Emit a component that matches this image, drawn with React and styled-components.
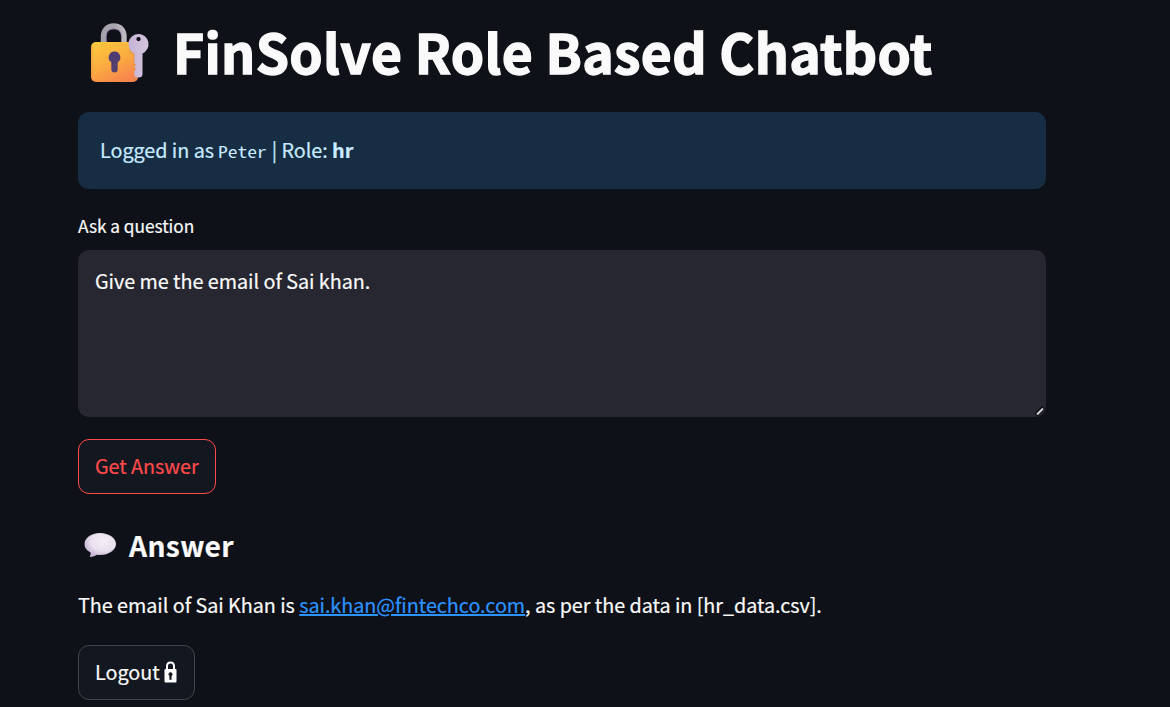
import React from "react";
import styled, { createGlobalStyle } from "styled-components";

const GlobalStyle = createGlobalStyle`
  *, *::before, *::after { box-sizing: border-box; }
  body {
    margin: 0;
    background: #0e1117;
    color: #fafafa;
    font-family: "Noto Sans CJK SC", "Noto Sans", sans-serif;
    font-size: 19.8px;
    letter-spacing: -0.04px;
    -webkit-text-stroke: 0.2px currentColor;
    overflow: hidden;
  }
`;

const Page = styled.main`
  display: flex;
  flex-direction: column;
  align-items: flex-start;
  width: 968px;
  margin-left: 78px;
  height: 707px;
`;

const Title = styled.h1`
  display: flex;
  align-items: flex-start;
  margin: 0;
  padding-top: 15px;
  height: 112px;
  font-size: 53.4px;
  font-weight: 700;
  letter-spacing: 0.33px;
  line-height: 72px;
  -webkit-text-stroke: 1.4px currentColor;
  white-space: nowrap;
  svg { flex: none; width: 60px; height: 60px; margin: 8px 23px 0 12px; }
`;

const Alert = styled.div`
  width: 100%;
  height: 77px;
  padding: 21px 22px;
  border-radius: 11px;
  background: #172d43;
  color: #c7ebff;
  line-height: 33px;
  white-space: nowrap;
`;

const Code = styled.code`
  display: inline-block;
  width: 49px;
  font-family: "Noto Sans Mono CJK SC", "Liberation Mono", monospace;
  font-size: 16px;
  letter-spacing: 0;
  line-height: 1;
  transform: scaleX(1.22);
  transform-origin: left;
  -webkit-text-stroke: 0;
`;

const Label = styled.label`
  margin-top: 21px;
  height: 40px;
  font-size: 17.3px;
  line-height: 32px;
`;

const Field = styled.div`
  position: relative;
  width: 100%;
  height: 167px;
`;

const TextArea = styled.textarea`
  display: block;
  width: 100%;
  height: 100%;
  padding: 15px 17px;
  border: 0;
  border-radius: 11px;
  outline: none;
  resize: none;
  background: #262730;
  color: #fafafa;
  font: inherit;
  letter-spacing: inherit;
  line-height: 31px;
`;

const Grip = styled.svg`
  position: absolute;
  right: 1px;
  bottom: 1px;
  width: 10px;
  height: 10px;
`;

const Button = styled.button`
  display: flex;
  align-items: center;
  flex: none;
  width: ${(p) => p.$width};
  height: 55px;
  margin-top: ${(p) => p.$top};
  padding: 0 16px 2px;
  border: 1px solid ${(p) => (p.$accent ? "#ff4b4b" : "#41444c")};
  border-radius: 11px;
  background: #131720;
  color: ${(p) => (p.$accent ? "#ff4b4b" : "#fafafa")};
  font: inherit;
  letter-spacing: inherit;
  line-height: 35px;
  white-space: nowrap;
  svg { flex: none; width: 13px; height: 22px; margin-left: 4px; }
`;

const Heading = styled.h3`
  display: flex;
  margin: 31px 0 0;
  height: 64px;
  font-size: 28.2px;
  font-weight: 700;
  letter-spacing: 0.35px;
  line-height: 39px;
  svg { flex: none; width: 32px; height: 26px; margin: 7px 13px 0 6px; }
`;

const Answer = styled.p`
  margin: 0;
  height: 34px;
  line-height: 32px;
  letter-spacing: -0.045px;
  white-space: nowrap;
`;

const Link = styled.a`
  color: #2d93ff;
  text-decoration: underline;
  text-decoration-thickness: 1.6px;
`;

const LockKeyIcon = () => (
  <svg viewBox="0 0 60 60" aria-hidden="true">
    <defs>
      <linearGradient id="body" x1="0.2" y1="0" x2="0.75" y2="1">
        <stop offset="0" stopColor="#fcc63d" />
        <stop offset="0.5" stopColor="#fbab40" />
        <stop offset="1" stopColor="#f7824f" />
      </linearGradient>
      <linearGradient id="shackle" x1="0" y1="0" x2="1" y2="0">
        <stop offset="0" stopColor="#a5a2aa" />
        <stop offset="0.5" stopColor="#aaa4ae" />
        <stop offset="1" stopColor="#bdb9c0" />
      </linearGradient>
      <linearGradient id="hole" x1="0" y1="0" x2="0" y2="1">
        <stop offset="0" stopColor="#4b3b72" />
        <stop offset="1" stopColor="#544270" />
      </linearGradient>
      <linearGradient id="key" x1="0" y1="0" x2="1" y2="0">
        <stop offset="0" stopColor="#c5b2d5" />
        <stop offset="1" stopColor="#d5c5df" />
      </linearGradient>
    </defs>
    <path d="M13.5 21V13.5C13.5 7 17.5 3 23.8 3S34 7 34 13.5V21" fill="none" stroke="url(#shackle)" strokeWidth="5.4" />
    <path d="M16.2 20V13.5C16.2 8.7 19 6 23.8 6S31.5 8.7 31.5 13.5" fill="none" stroke="#9b80b3" strokeWidth="0.9" />
    <rect x="1" y="19" width="47" height="40" rx="5" fill="url(#body)" />
    <path d="M1.800 23V54Q2 58 6 58.300H43" fill="none" stroke="#ee8b45" strokeWidth="1" opacity="0.6" />
    <path d="M40 21q-3 7 3 11l1 20-1 7q4-1 5-5V21z" fill="#dc8c51" opacity="0.5" />
    <path d="M24.5 28.5a5.9 5.9 0 0 1 3.200 10.800v7a3.200 3.200 0 0 1-6.400 0v-7a5.900 5.900 0 0 1 3.200-10.800z" fill="url(#hole)" />
    <path fillRule="evenodd" d="M48.5 11A10.2 10.2 0 0 1 52.5 30.5V51Q52.500 54.500 48.500 54.500T44.400 52v-4l1.600-2-1.600-2 1.600-2-1.600-2V30.5A10.2 10.2 0 0 1 48.5 11zm0 3a2.1 2.1 0 1 0 0 4.200a2.1 2.1 0 0 0 0-4.200z" fill="url(#key)" />
    <circle cx="48.500" cy="16.100" r="1.800" fill="#0e1117" />
  </svg>
);

const SpeechIcon = () => (
  <svg viewBox="0 0 32 26" aria-hidden="true">
    <defs>
      <radialGradient id="bubble" cx="0.6" cy="0.35" r="0.65">
        <stop offset="0" stopColor="#f4eff7" />
        <stop offset="0.6" stopColor="#e9e1ee" />
        <stop offset="1" stopColor="#c5b5d4" />
      </radialGradient>
    </defs>
    <path d="M16 1C25 1 32 6 32 12S25 23 16 23Q14.500 23 13 22.800Q10.500 24.800 6.500 25Q5.500 25 6 24Q7 22.500 6.500 20.500Q0.500 17.500 0.500 12C0.500 6 7 1 16 1z" fill="url(#bubble)" />
  </svg>
);

const LockIcon = () => (
  <svg viewBox="0 0 13 22" aria-hidden="true">
    <path d="M3 9V5.200Q3 1.500 6.500 1.500T10 5.200V9" fill="none" stroke="#fff" strokeWidth="2" />
    <rect x="0.500" y="8" width="12" height="13.500" rx="1" fill="#fff" />
    <path d="M6.500 11.500a1.800 1.800 0 0 1 .8 3.400V18.500H5.700V14.900a1.800 1.800 0 0 1 .8-3.400z" fill="#131720" stroke="#131720" strokeWidth="0.5" />
  </svg>
);

export default function App() {
  return (
    <>
      <GlobalStyle />
      <Page>
        <Title>
          <LockKeyIcon />
          <span>FinSolve Role Based Chatbot</span>
        </Title>
        <Alert>
          Logged in as <Code>Peter</Code> | Role: <strong>hr</strong>
        </Alert>
        <Label htmlFor="question">Ask a question</Label>
        <Field>
          <TextArea id="question" spellCheck={false} defaultValue="Give me the email of Sai khan." />
          <Grip viewBox="0 0 10 10" aria-hidden="true">
            <path d="M1 9L8.500 1.500" stroke="#08090c" strokeWidth="4" />
            <path d="M2 8.500L8 2.500" stroke="#d5d5d7" strokeWidth="2" />
          </Grip>
        </Field>
        <Button $accent $width="138px" $top="22px">Get Answer</Button>
        <Heading>
          <SpeechIcon />
          <span>Answer</span>
        </Heading>
        <Answer>
          The email of Sai Khan is <Link href="mailto:sai.khan@fintechco.com">sai.khan@fintechco.com</Link>, as per the data in [hr_data.csv].
        </Answer>
        <Button $width="117px" $top="22px">
          Logout
          <LockIcon />
        </Button>
      </Page>
    </>
  );
}
